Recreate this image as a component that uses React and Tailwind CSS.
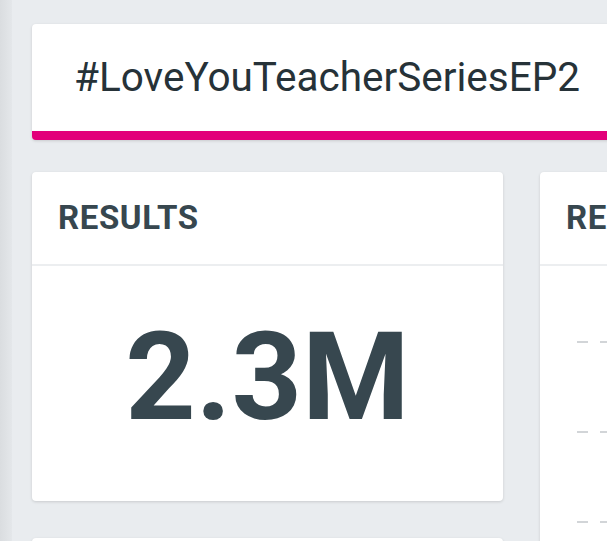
const Card = ({ title, children, bodyClass }) => (
  <div className="bg-white rounded shadow-[0_1px_3px_rgba(0,0,0,0.14)] flex flex-col shrink-0">
    <div className="h-[94px] shrink-0 pl-[26px] pr-7 flex items-center border-b-2 border-[#eceef0]">
      <h2 className="text-[33px] font-bold text-[#37474f] tracking-[0.6px] uppercase whitespace-nowrap">{title}</h2>
    </div>
    <div className={bodyClass}>{children}</div>
  </div>
);

const GridLine = () => (
  <div className="h-[2px] shrink-0 ml-[37px] bg-[repeating-linear-gradient(90deg,#d2d5d8_0_11px,transparent_11px_23px)]" />
);

export default function App() {
  return (
    <div
      className="w-[607px] h-[541px] overflow-hidden bg-[#e9ecef] flex"
      style={{ fontFamily: 'Roboto, "Liberation Sans", sans-serif' }}
    >
      <div className="w-3 shrink-0 bg-gradient-to-r from-[#dadde0] to-[#e4e7ea]" />

      <div className="pl-5 pt-6 flex flex-col gap-8 w-[999px] shrink-0">
        <div className="h-[116px] shrink-0 bg-white rounded shadow-[0_1px_3px_rgba(0,0,0,0.14)] border-b-[9px] border-[#e2007a] flex items-center pl-[42px]">
          <h1 className="text-[40.5px] text-[#263238] leading-none whitespace-nowrap">#LoveYouTeacherSeriesEP2</h1>
        </div>

        <div className="grid grid-cols-[471px_471px] gap-x-[37px] items-start shrink-0">
          <div className="flex flex-col gap-[37px]">
            <Card title="Results" bodyClass="h-[235px] shrink-0 flex justify-center pt-[50px]">
              <span className="text-[123px] font-bold leading-none text-[#37474f]">2.3M</span>
            </Card>
            <div className="h-[300px] shrink-0 bg-white rounded shadow-[0_1px_3px_rgba(0,0,0,0.14)]" />
          </div>

          <Card title="Reach" bodyClass="h-[500px] flex flex-col pt-[75px] gap-[88px]">
            <GridLine />
            <GridLine />
            <GridLine />
            <GridLine />
          </Card>
        </div>
      </div>
    </div>
  );
}
